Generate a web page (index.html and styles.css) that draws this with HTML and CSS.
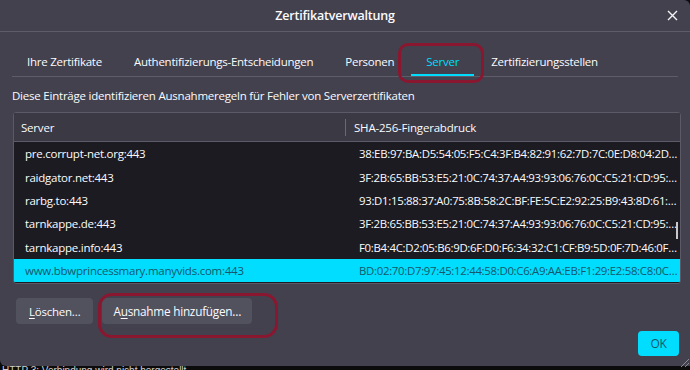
FILE: index.html
```html
<!DOCTYPE html>
<html lang="de">
<head>
<meta charset="utf-8">
<title>Zertifikatverwaltung</title>
<link rel="stylesheet" href="styles.css">
</head>
<body>
<div class="dialog">
  <div class="titlebar">
    <span class="title">Zertifikatverwaltung</span>
    <span class="close">
      <svg width="11" height="11" viewBox="0 0 11 11"><path d="M1 1L10 10M10 1L1 10" stroke="#f4f4f6" stroke-width="1.4" fill="none"/></svg>
    </span>
  </div>
  <div class="tabs">
    <div class="tab">Ihre Zertifikate</div>
    <div class="tab">Authentifizierungs-Entscheidungen</div>
    <div class="tab">Personen</div>
    <div class="tab active">Server</div>
    <div class="tab">Zertifizierungsstellen</div>
    <div class="mark mark-tab"></div>
  </div>
  <p class="desc">Diese Einträge identifizieren Ausnahmeregeln für Fehler von Serverzertifikaten</p>
  <div class="table">
    <div class="thead">
      <div class="th th-server">Server</div>
      <div class="th th-sha">SHA-256-Fingerabdruck</div>
    </div>
    <div class="tbody">
      <div class="row"><span class="c1">pre.corrupt-net.org:443</span><span class="c2">38:EB:97:BA:D5:54:05:F5:C4:3F:B4:82:91:62:7D:7C:0E:D8:04:2D…</span></div>
      <div class="row"><span class="c1">raidgator.net:443</span><span class="c2">3F:2B:65:BB:53:E5:21:0C:74:37:A4:93:93:06:76:0C:C5:21:CD:95:…</span></div>
      <div class="row"><span class="c1">rarbg.to:443</span><span class="c2">93:D1:15:88:37:A0:75:8B:58:2C:BF:FE:5C:E2:92:25:B9:43:8D:61:…</span></div>
      <div class="row"><span class="c1">tarnkappe.de:443</span><span class="c2">3F:2B:65:BB:53:E5:21:0C:74:37:A4:93:93:06:76:0C:C5:21:CD:95:…</span></div>
      <div class="row"><span class="c1">tarnkappe.info:443</span><span class="c2">F0:B4:4C:D2:05:B6:9D:6F:D0:F6:34:32:C1:CF:B9:5D:0F:7D:46:0F…</span></div>
      <div class="row selected"><span class="c1">www.bbwprincessmary.manyvids.com:443</span><span class="c2">BD:02:70:D7:97:45:12:44:58:D0:C6:A9:AA:EB:F1:29:E2:58:C8:0C…</span></div>
      <div class="scrollthumb"></div>
    </div>
  </div>
  <div class="actions">
    <button class="btn btn-del"><u>L</u>öschen…</button>
    <button class="btn btn-add">A<u>u</u>snahme hinzufügen…</button>
    <div class="mark mark-btn"></div>
  </div>
  <div class="footer">
    <button class="btn ok">OK</button>
    <span class="grip"></span>
  </div>
</div>
<div class="below">HTTP 3: Verbindung wird nicht hergestellt</div>
</body>
</html>
```

FILE: styles.css
```css
html, body {
  margin: 0;
  padding: 0;
  background: #0c0c0d;
  width: 690px;
  height: 370px;
  overflow: hidden;
  font-family: "Open Sans", "Noto Sans", sans-serif;
  color: #fbfbfe;
}

.dialog {
  position: relative;
  width: 690px;
  height: 366px;
  background: #42414d;
  border-radius: 0 6px 0 6px;
  box-sizing: border-box;
  display: flex;
  flex-direction: column;
}

.titlebar {
  height: 31px;
  border-bottom: 1px solid #5d5c68;
  display: flex;
  align-items: center;
  justify-content: center;
  padding-right: 20px;
  position: relative;
}

.title {
  font-size: 12.5px;
  font-weight: 600;
  letter-spacing: -0.2px;
}

.close {
  position: absolute;
  right: 12px;
  top: 10px;
  width: 11px;
  height: 11px;
  display: flex;
}

.tabs {
  position: relative;
  display: flex;
  gap: 2px;
  margin: 0 12px;
  height: 45px;
  border-bottom: 1px solid #5d5c68;
  box-sizing: border-box;
}

.tab {
  padding: 16px 15px 0;
  font-size: 11.5px;
  letter-spacing: -0.25px;
  display: flex;
  align-items: center;
  box-sizing: border-box;
  border-bottom: 2px solid transparent;
}

.tab.active {
  color: #00ddff;
  border-bottom-color: #00ddff;
}

.mark {
  position: absolute;
  border: 3px solid #8a1730;
  border-radius: 10px;
  pointer-events: none;
}

.mark-tab {
  left: 386px;
  top: 11px;
  width: 80px;
  height: 34px;
}

.desc {
  margin: 11px 0 0 12px;
  font-size: 11.5px;
  letter-spacing: -0.22px;
  line-height: 16px;
}

.table {
  margin: 8px 9px 0 13px;
  border: 1px solid #5b5a66;
  border-radius: 3px;
  background: #1c1b22;
  height: 172px;
  box-sizing: border-box;
  display: flex;
  flex-direction: column;
  overflow: hidden;
}

.thead {
  height: 28px;
  background: #3a3944;
  border-bottom: 1px solid #5b5a66;
  display: flex;
  align-items: center;
  flex-shrink: 0;
}

.th {
  font-size: 11.5px;
  letter-spacing: -0.2px;
}

.th-server {
  width: 332px;
  padding-left: 7px;
  box-sizing: border-box;
  border-right: 1px solid #6a6975;
  height: 17px;
  line-height: 17px;
}

.th-sha {
  padding-left: 8px;
}

.tbody {
  position: relative;
  flex: 1;
}

.row {
  height: 23.4px;
  display: flex;
  align-items: center;
  font-size: 11.5px;
  letter-spacing: -0.25px;
  white-space: nowrap;
}

.c1 {
  width: 345px;
  flex-shrink: 0;
  padding-left: 11px;
  box-sizing: border-box;
}

.c2 {
  font-size: 11.4px;
  letter-spacing: -0.3px;
}

.row.selected {
  background: #00ddff;
  color: #15566a;
}

.scrollthumb {
  position: absolute;
  right: 2px;
  top: 80px;
  width: 2px;
  height: 17px;
  background: #c8c8cc;
}

.actions {
  position: relative;
  display: flex;
  gap: 9px;
  margin: 14px 0 0 16px;
}

.btn {
  font-family: "Open Sans", "Noto Sans", sans-serif;
  font-size: 11.5px;
  letter-spacing: -0.25px;
  color: #fbfbfe;
  background: #52515e;
  border: none;
  border-radius: 4px;
  height: 26px;
  padding: 0 13px;
}

.btn-add {
  padding: 0 11px;
  font-size: 11.8px;
}

.btn u {
  text-decoration-thickness: 1px;
  text-underline-offset: 2px;
}

.mark-btn {
  left: 82px;
  top: -5px;
  width: 174px;
  height: 39px;
  border-radius: 14px;
}

.footer {
  position: relative;
  display: flex;
  justify-content: flex-end;
  margin: 7px 11px 0 0;
}

.btn.ok {
  background: #00ddff;
  color: #15566a;
  width: 41px;
  height: 25px;
  padding: 0;
  font-size: 12px;
}

.grip {
  position: absolute;
  right: -10px;
  bottom: -11px;
  width: 8px;
  height: 8px;
  background: linear-gradient(135deg, transparent 45%, #8d8c96 45%, #8d8c96 55%, transparent 55%, transparent 70%, #8d8c96 70%, #8d8c96 80%, transparent 80%);
}

.below {
  height: 4px;
  overflow: hidden;
  font-size: 10px;
  line-height: 10px;
  padding-left: 2px;
  color: #d0d0d0;
  font-family: "Liberation Sans", sans-serif;
}
```
